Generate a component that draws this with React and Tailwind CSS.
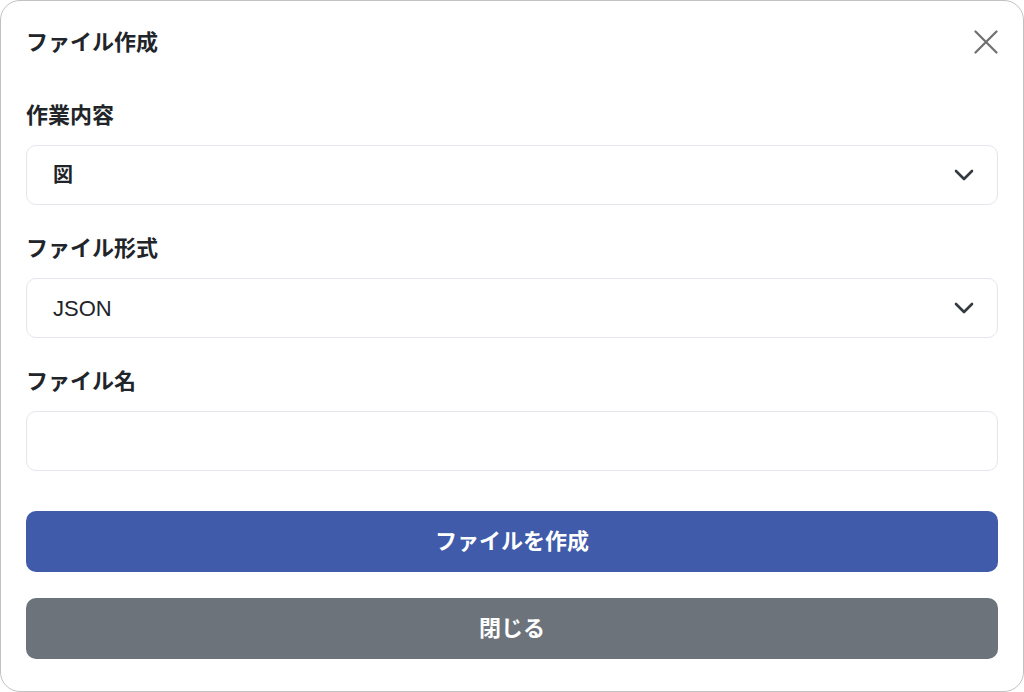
const font = { fontFamily: '"Inter", "Noto Sans CJK JP", sans-serif' };

function Chevron() {
  return (
    <svg width="20" height="12" viewBox="0 0 20 12" fill="none" className="text-[#343a40]">
      <path d="M2 2l8 8 8-8" stroke="currentColor" strokeWidth="2.6" strokeLinecap="round" strokeLinejoin="round" />
    </svg>
  );
}

function CloseIcon() {
  return (
    <svg width="24" height="24" viewBox="0 0 24 24" fill="none" className="text-[#6f6f6f]">
      <path d="M1.5 1.5l21 21M22.5 1.5l-21 21" stroke="currentColor" strokeWidth="2.2" strokeLinecap="round" />
    </svg>
  );
}

function Select({ value, bold }) {
  return (
    <div className="h-[60px] rounded-[10px] border border-[#e3e6ea] bg-white flex items-center justify-between pl-[26px] pr-[23px]">
      {bold ? (
        <span className="text-[20px] font-bold text-[#212529]">{value}</span>
      ) : (
        <span className="text-[22px] text-[#212529]" style={{ fontFamily: '"Liberation Sans", Arial, sans-serif' }}>
          {value}
        </span>
      )}
      <Chevron />
    </div>
  );
}

function Label({ children, className = '' }) {
  return <div className={`text-[22px] leading-[28px] font-bold text-[#212529] ${className}`}>{children}</div>;
}

export default function App() {
  return (
    <div style={font} className="w-[1024px] h-[692px] bg-white">
      <div className="w-full h-full border border-[#c2c2c2] rounded-[20px] bg-white px-[25px] pt-[27px] flex flex-col">
        <div className="flex items-center justify-between h-[28px]">
          <div className="text-[22px] leading-[28px] font-bold text-[#212529]">ファイル作成</div>
          <div className="-mt-[1px]">
            <CloseIcon />
          </div>
        </div>

        <Label className="mt-[45px]">作業内容</Label>
        <div className="mt-[16px]">
          <Select value="図" bold />
        </div>

        <Label className="mt-[29px]">ファイル形式</Label>
        <div className="mt-[16px]">
          <Select value="JSON" />
        </div>

        <Label className="mt-[29px]">ファイル名</Label>
        <input
          type="text"
          className="mt-[16px] h-[60px] rounded-[10px] border border-[#e3e6ea] bg-white px-[26px] outline-none"
        />

        <button className="mt-[40px] h-[61px] rounded-[10px] bg-[#3f5ba9] text-white text-[22px] font-bold">
          ファイルを作成
        </button>
        <button className="mt-[26px] h-[61px] rounded-[10px] bg-[#6c737b] text-white text-[22px] font-bold">
          閉じる
        </button>
      </div>
    </div>
  );
}
